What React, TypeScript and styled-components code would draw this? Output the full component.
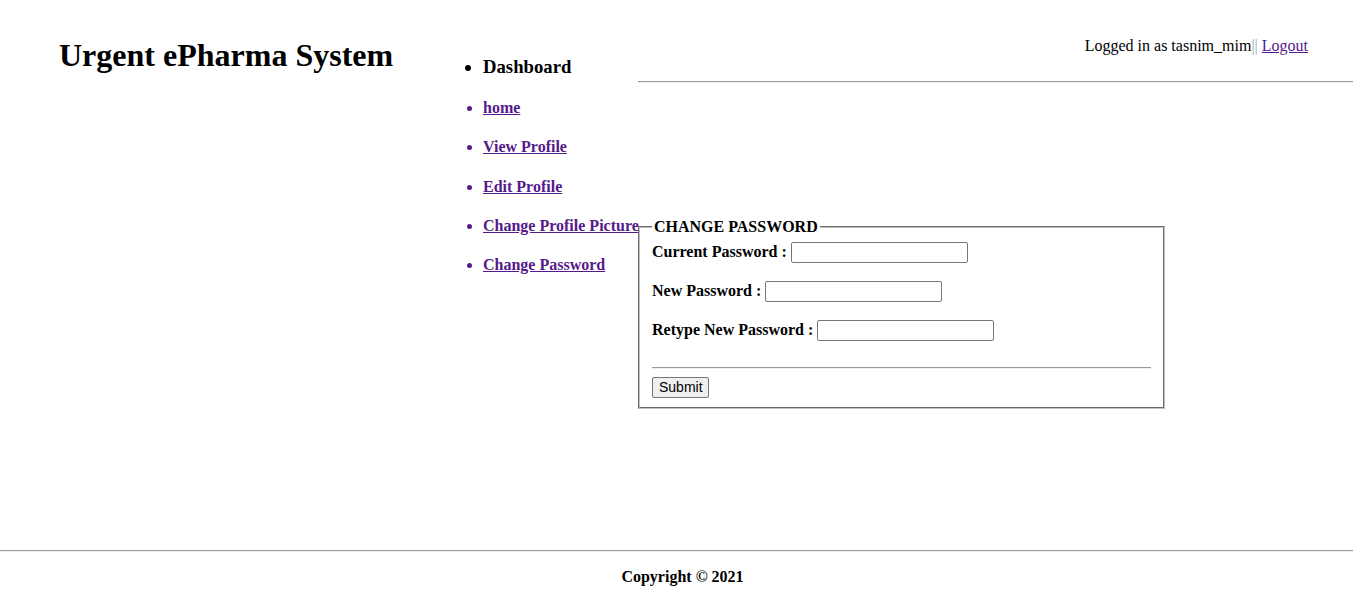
import React from "react";
import styled, { createGlobalStyle } from "styled-components";

const GlobalStyle = createGlobalStyle`
  html, body {
    margin: 0;
    padding: 0;
    background: #fff;
    color: #000;
    font-family: "Liberation Serif", "Times New Roman", serif;
    font-size: 16px;
  }
`;

const Page = styled.div`
  width: 1353px;
  min-height: 596px;
  display: flex;
  flex-direction: column;
`;

const Main = styled.div`
  height: 550px;
  display: grid;
  grid-template-columns: 443px 195px 1fr;
  align-items: start;
`;

const Title = styled.h1`
  margin: 37px 0 0 59px;
  font-size: 32px;
  line-height: 36px;
  font-weight: bold;
  white-space: nowrap;
`;

const Menu = styled.ul`
  margin: 56px 0 0;
  padding: 0 0 0 40px;
  list-style: disc;
`;

const MenuHead = styled.li`
  font-size: 18.72px;
  line-height: 21.5px;
  font-weight: bold;
  margin-bottom: 21.5px;
`;

const MenuItem = styled.li`
  font-size: 16px;
  line-height: 18px;
  font-weight: bold;
  color: #551a8b;
  margin-bottom: 21.28px;
  white-space: nowrap;
`;

const Link = styled.a`
  color: #551a8b;
  text-decoration: underline;
  cursor: pointer;
`;

const RightCol = styled.div`
  display: flex;
  flex-direction: column;
`;

const LoginBar = styled.div`
  padding: 37px 45px 0 0;
  line-height: 18px;
  text-align: right;
  white-space: nowrap;
`;

const Sep = styled.span`
  color: #9aa4b4;
`;

const Rule = styled.hr<{ $top?: number; $bottom?: number }>`
  margin: ${(p) => p.$top ?? 8}px 0 ${(p) => p.$bottom ?? 8}px;
  border: 0;
  border-top: 1px solid #9a9a9a;
  border-bottom: 1px solid #eeeeee;
  height: 0;
`;

const Fieldset = styled.fieldset`
  margin: 135px 0 0;
  width: 527px;
  box-sizing: border-box;
  padding: 5.6px 12px 9px;
  border: 2px groove #c0c0c0;
`;

const Legend = styled.legend`
  padding: 0 2px;
  font-weight: bold;
  font-size: 16px;
  line-height: 18px;
`;

const Form = styled.div`
  display: flex;
  flex-direction: column;
`;

const FieldRow = styled.div`
  height: 21px;
  margin-bottom: 18px;
  display: flex;
  align-items: center;
  font-weight: bold;
  white-space: pre;
`;

const TextInput = styled.input`
  width: 177px;
  height: 21px;
  box-sizing: border-box;
  border: 1px solid #767676;
  border-radius: 2px;
  padding: 1px 2px;
  font: 13.33px "Liberation Sans", Arial, sans-serif;
`;

const SubmitButton = styled.button`
  align-self: flex-start;
  width: 57px;
  height: 21px;
  padding: 1px 6px;
  box-sizing: border-box;
  background: #efefef;
  border: 1px solid #767676;
  border-radius: 2px;
  color: #000;
  font: 14px "Liberation Sans", Arial, sans-serif;
  line-height: 17px;
`;

const Footer = styled.footer`
  display: flex;
  flex-direction: column;
`;

const Copyright = styled.div`
  padding: 15.5px 0 0 12px;
  line-height: 18.4px;
  text-align: center;
  font-weight: bold;
`;

const menuLinks = [
  "home",
  "View Profile",
  "Edit Profile",
  "Change Profile Picture",
  "Change Password",
];

const fields = ["Current Password", "New Password", "Retype New Password"];

export default function App() {
  return (
    <Page>
      <GlobalStyle />
      <Main>
        <Title>Urgent ePharma System</Title>
        <Menu>
          <MenuHead>Dashboard</MenuHead>
          {menuLinks.map((l) => (
            <MenuItem key={l}>
              <Link>{l}</Link>
            </MenuItem>
          ))}
        </Menu>
        <RightCol>
          <LoginBar>
            Logged in as tasnim_mim<Sep>||</Sep> <Link>Logout</Link>
          </LoginBar>
          <Rule $top={26} $bottom={0} />
          <Fieldset>
            <Legend>CHANGE PASSWORD</Legend>
            <Form>
              {fields.map((f) => (
                <FieldRow key={f}>
                  {f} : <TextInput type="password" />
                </FieldRow>
              ))}
              <Rule $top={8} $bottom={8} />
              <SubmitButton>Submit</SubmitButton>
            </Form>
          </Fieldset>
        </RightCol>
      </Main>
      <Footer>
        <Rule $top={0} $bottom={0} />
        <Copyright>Copyright © 2021</Copyright>
      </Footer>
    </Page>
  );
}
